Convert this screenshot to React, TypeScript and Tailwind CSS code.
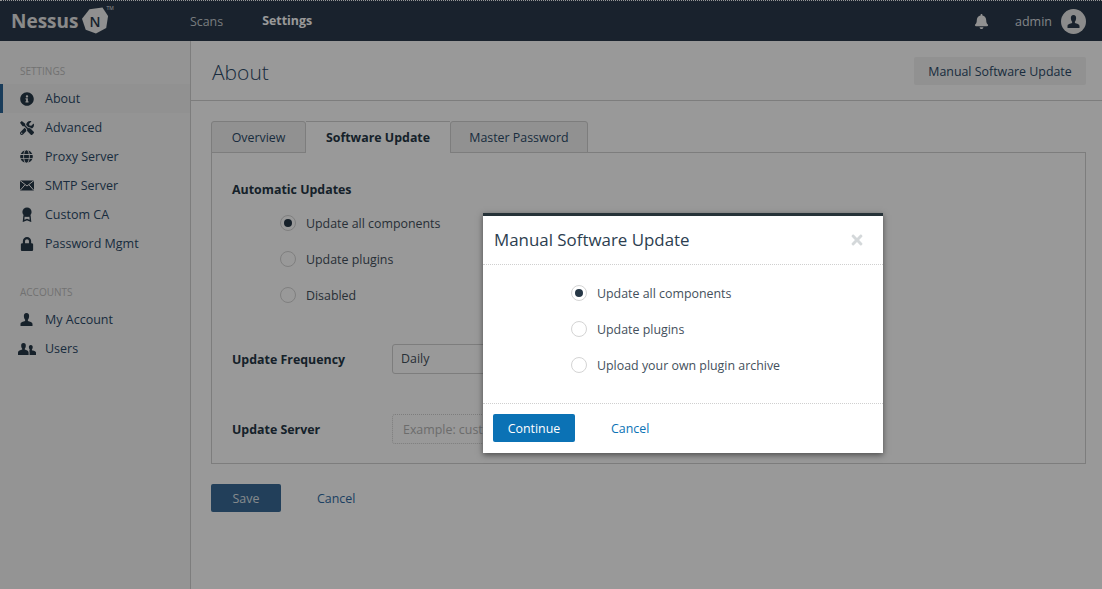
import React from 'react';
import { FaBell, FaGlobe, FaInfoCircle, FaLock, FaTimes, FaTools } from 'react-icons/fa';

const EnvelopeIcon = () => (
  <svg viewBox="0 0 14 11" className="w-[14px] h-[11px]">
    <rect x="0" y="0.5" width="14" height="10" fill="currentColor" />
    <path d="M0 0.5 L7 6 L14 0.5 M0 10.5 L5 4.8 M14 10.5 L9 4.8" fill="none" stroke="#f7f7f7" strokeWidth="1" />
  </svg>
);

const RibbonIcon = () => (
  <svg viewBox="0 0 12 15" className="w-[12px] h-[15px]">
    <circle cx="6" cy="5" r="4.6" fill="currentColor" />
    <path d="M3 9 L2.5 14 L6 12.5 L9.5 14 L9 9 Z" fill="none" stroke="currentColor" strokeWidth="1.4" />
  </svg>
);

const BustIcon = ({ className = 'w-[13px] h-[13px]' }: { className?: string }) => (
  <svg viewBox="0 0 13 13" className={className}>
    <path d="M6.5 0 C8.4 0 9.3 1.5 9.1 3.4 C9 5 8.4 6 7.9 6.6 L7.9 7.9 C9.8 8.6 12.5 9 12.5 11 L12.5 13 L0.5 13 L0.5 11 C0.5 9 3.2 8.6 5.1 7.9 L5.1 6.6 C4.6 6 4 5 3.9 3.4 C3.7 1.5 4.6 0 6.5 0 Z" fill="currentColor" />
  </svg>
);

const UsersIcon = () => (
  <svg viewBox="0 0 18 12" className="w-[18px] h-[12px]">
    <path d="M5.5 0 C7.2 0 8 1.3 7.8 3 C7.7 4.3 7.2 5.2 6.8 5.7 L6.8 6.6 C8.4 7.2 10.6 7.6 10.6 9.4 L10.6 12 L0 12 L0 9.4 C0 7.6 2.6 7.2 4.2 6.6 L4.2 5.7 C3.8 5.2 3.3 4.3 3.2 3 C3 1.3 3.8 0 5.5 0 Z" fill="currentColor" />
    <path d="M12.8 2 C14.2 2 14.9 3 14.7 4.4 C14.6 5.4 14.2 6.1 13.9 6.5 L13.9 7.2 C15.2 7.7 18 8 18 9.6 L18 12 L11.6 12 L11.6 9 C11.6 8 10.8 7.4 11.7 7.2 L11.7 6.5 C11.4 6.1 11 5.4 10.9 4.4 C10.7 3 11.4 2 12.8 2 Z" fill="currentColor" />
  </svg>
);

const settingsItems = [
  { label: 'About', icon: <FaInfoCircle size={14} />, active: true },
  { label: 'Advanced', icon: <FaTools size={14} /> },
  { label: 'Proxy Server', icon: <FaGlobe size={13} /> },
  { label: 'SMTP Server', icon: <EnvelopeIcon /> },
  { label: 'Custom CA', icon: <RibbonIcon /> },
  { label: 'Password Mgmt', icon: <FaLock size={14} /> },
];

const accountItems = [
  { label: 'My Account', icon: <BustIcon /> },
  { label: 'Users', icon: <UsersIcon /> },
];

type NavItem = { label: string; icon: React.ReactNode; active?: boolean };

const SideItem = ({ item }: { item: NavItem }) => (
  <div className={`h-[29px] flex items-center text-[12.5px] text-[#2c4a68] border-l-[3px] ${item.active ? 'border-[#2a6496] bg-[#f2f2f2]' : 'border-transparent'}`}>
    <span className="w-[42px] pl-[6px] pr-[1px] flex justify-center text-[#263746] shrink-0">{item.icon}</span>
    <span className="pt-[1px]">{item.label}</span>
  </div>
);

const Radio = ({ label, checked = false }: { label: string; checked?: boolean }) => (
  <div className="h-[36px] flex items-center gap-[10px] text-[12.4px] text-[#44505c]">
    <span className="w-[16px] h-[16px] rounded-full border border-[#d4d4d4] bg-white flex items-center justify-center">
      {checked && <span className="w-[8px] h-[8px] rounded-full bg-[#263746]" />}
    </span>
    <span className="pt-[3px]">{label}</span>
  </div>
);

export default function App() {
  return (
    <div className="relative w-[1102px] h-[589px] overflow-hidden bg-white font-['Open_Sans',sans-serif]">
      <header className="h-[41px] bg-[#2a3a4b] border-t border-dotted border-white flex items-center text-[#dfe3e6]">
        <div className="w-[190px] pl-[11px] flex items-center shrink-0">
          <span className="text-[19px] leading-none font-bold text-[#e6e6e6]">Nessus</span>
          <span className="relative ml-[3px] w-[27px] h-[28px] flex items-center justify-center">
            <svg viewBox="0 0 29 29" className="absolute inset-0 w-full h-full">
              <polygon points="8,2 22,0 28,9 26,22 15,28 4,24 0,12" fill="#f0f0f0" />
            </svg>
            <span className="relative text-[14px] font-semibold text-[#2a3a4b]">N</span>
            <span className="absolute left-[25px] top-[-1px] text-[5px] leading-none text-[#e6e6e6]">TM</span>
          </span>
        </div>
        <nav className="flex items-center text-[12.4px] pt-[1px]">
          <span className="text-[#c8ced3] pt-[1px]">Scans</span>
          <span className="ml-[39px] font-bold text-white">Settings</span>
        </nav>
        <div className="ml-auto flex items-center pr-[16px]">
          <FaBell size={15} className="text-[#f2f2f2]" />
          <span className="ml-[26px] text-[12.5px] text-[#d9dde0] pt-[2px]">admin</span>
          <span className="ml-[9px] w-[25px] h-[25px] rounded-full bg-[#e8e8e8] flex items-center justify-center text-[#2a3a4b]">
            <BustIcon />
          </span>
        </div>
      </header>

      <div className="flex h-[548px]">
        <aside className="w-[191px] shrink-0 bg-[#f7f7f7] border-r border-[#d0d0d0] pt-[23px]">
          <div className="pl-[20px] text-[10px] leading-[14px] text-[#bdbdbd] mb-[6px]">SETTINGS</div>
          {settingsItems.map((item) => <SideItem key={item.label} item={item} />)}
          <div className="pl-[20px] mt-[27px] text-[10px] leading-[14px] text-[#bdbdbd] mb-[6px]">ACCOUNTS</div>
          {accountItems.map((item) => <SideItem key={item.label} item={item} />)}
        </aside>

        <main className="flex-1">
          <div className="h-[60px] border-b border-[#d0d0d0] flex items-center justify-between pl-[21px] pr-[16px]">
            <h1 className="text-[21px] font-light text-[#2c4a68] pt-[4px]">About</h1>
            <button className="h-[28px] w-[172px] rounded-[2px] bg-[#f2f2f2] pt-[3px] text-[12.4px] text-[#2c4a68]">Manual Software Update</button>
          </div>

          <div className="pl-[20px] pr-[16px] pt-[20px]">
            <div className="flex h-[32px] relative">
              <div className="w-[95px] border border-[#d0d0d0] rounded-t-[3px] bg-[#f2f2f2] flex items-center justify-center pt-[2px] text-[12.4px] text-[#2c4a68]">Overview</div>
              <div className="w-[144px] h-[32px] border-t border-[#d0d0d0] bg-white flex items-center justify-center pt-[2px] text-[12.4px] font-bold text-[#263746]">Software Update</div>
              <div className="w-[138px] border border-[#d0d0d0] rounded-t-[3px] bg-[#f2f2f2] flex items-center justify-center pt-[2px] text-[12.4px] text-[#2c4a68]">Master Password</div>
            </div>
            <section className="h-[312px] border border-[#d0d0d0] -mt-[1px] pl-[20px] pt-[27px]">
              <div className="text-[12.4px] leading-[20px] font-bold text-[#263746]">Automatic Updates</div>
              <div className="pl-[48px] mt-[5px]">
                <Radio label="Update all components" checked />
                <Radio label="Update plugins" />
                <Radio label="Disabled" />
              </div>
              <div className="flex items-center mt-[31px]">
                <label className="w-[160px] text-[12.4px] font-bold text-[#263746] pt-[3px]">Update Frequency</label>
                <div className="w-[300px] h-[30px] border border-[#d0d0d0] rounded-[3px] flex items-center px-[8px] text-[12.4px] text-[#44505c]">Daily</div>
              </div>
              <div className="flex items-center mt-[40px]">
                <label className="w-[160px] text-[12.4px] font-bold text-[#263746] pt-[3px]">Update Server</label>
                <div className="w-[300px] h-[30px] border border-dotted border-[#d0d0d0] rounded-[3px] flex items-center px-[10px] pt-[2px] text-[12.4px] text-[#b5b5b5]">Example: custom-host.example.com</div>
              </div>
            </section>
            <div className="flex items-center mt-[20px]">
              <button className="w-[70px] h-[28px] rounded-[2px] bg-[#3a6a96] pt-[2px] text-[12.4px] text-[#dfe5ea]">Save</button>
              <span className="ml-[36px] text-[12.4px] text-[#2f6ba3] pt-[3px]">Cancel</span>
            </div>
          </div>
        </main>
      </div>

      {/* modal backdrop */}
      <div className="absolute inset-0 bg-black/40" />

      <div className="absolute left-[483px] top-[213px] w-[400px] h-[240px] bg-white border-t-[3px] border-[#263238] shadow-[0_2px_6px_rgba(0,0,0,0.5)]">
        <div className="h-[49px] border-b border-dotted border-[#cfcfcf] flex items-center justify-between pl-[11px] pr-[18px]">
          <span className="text-[16.9px] text-[#2c3e50]">Manual Software Update</span>
          <FaTimes size={16} className="text-[#d4d8da]" />
        </div>
        <div className="h-[139px] border-b border-dotted border-[#cfcfcf] pl-[88px] pt-[10px]">
          <Radio label="Update all components" checked />
          <Radio label="Update plugins" />
          <Radio label="Upload your own plugin archive" />
        </div>
        <div className="flex items-center pl-[10px] pt-[10px]">
          <button className="w-[82px] h-[28px] rounded-[2px] bg-[#0b72b5] pt-[2px] text-[12.4px] font-medium text-white">Continue</button>
          <span className="ml-[36px] text-[12.4px] text-[#0b72b5] pt-[3px]">Cancel</span>
        </div>
      </div>
    </div>
  );
}
